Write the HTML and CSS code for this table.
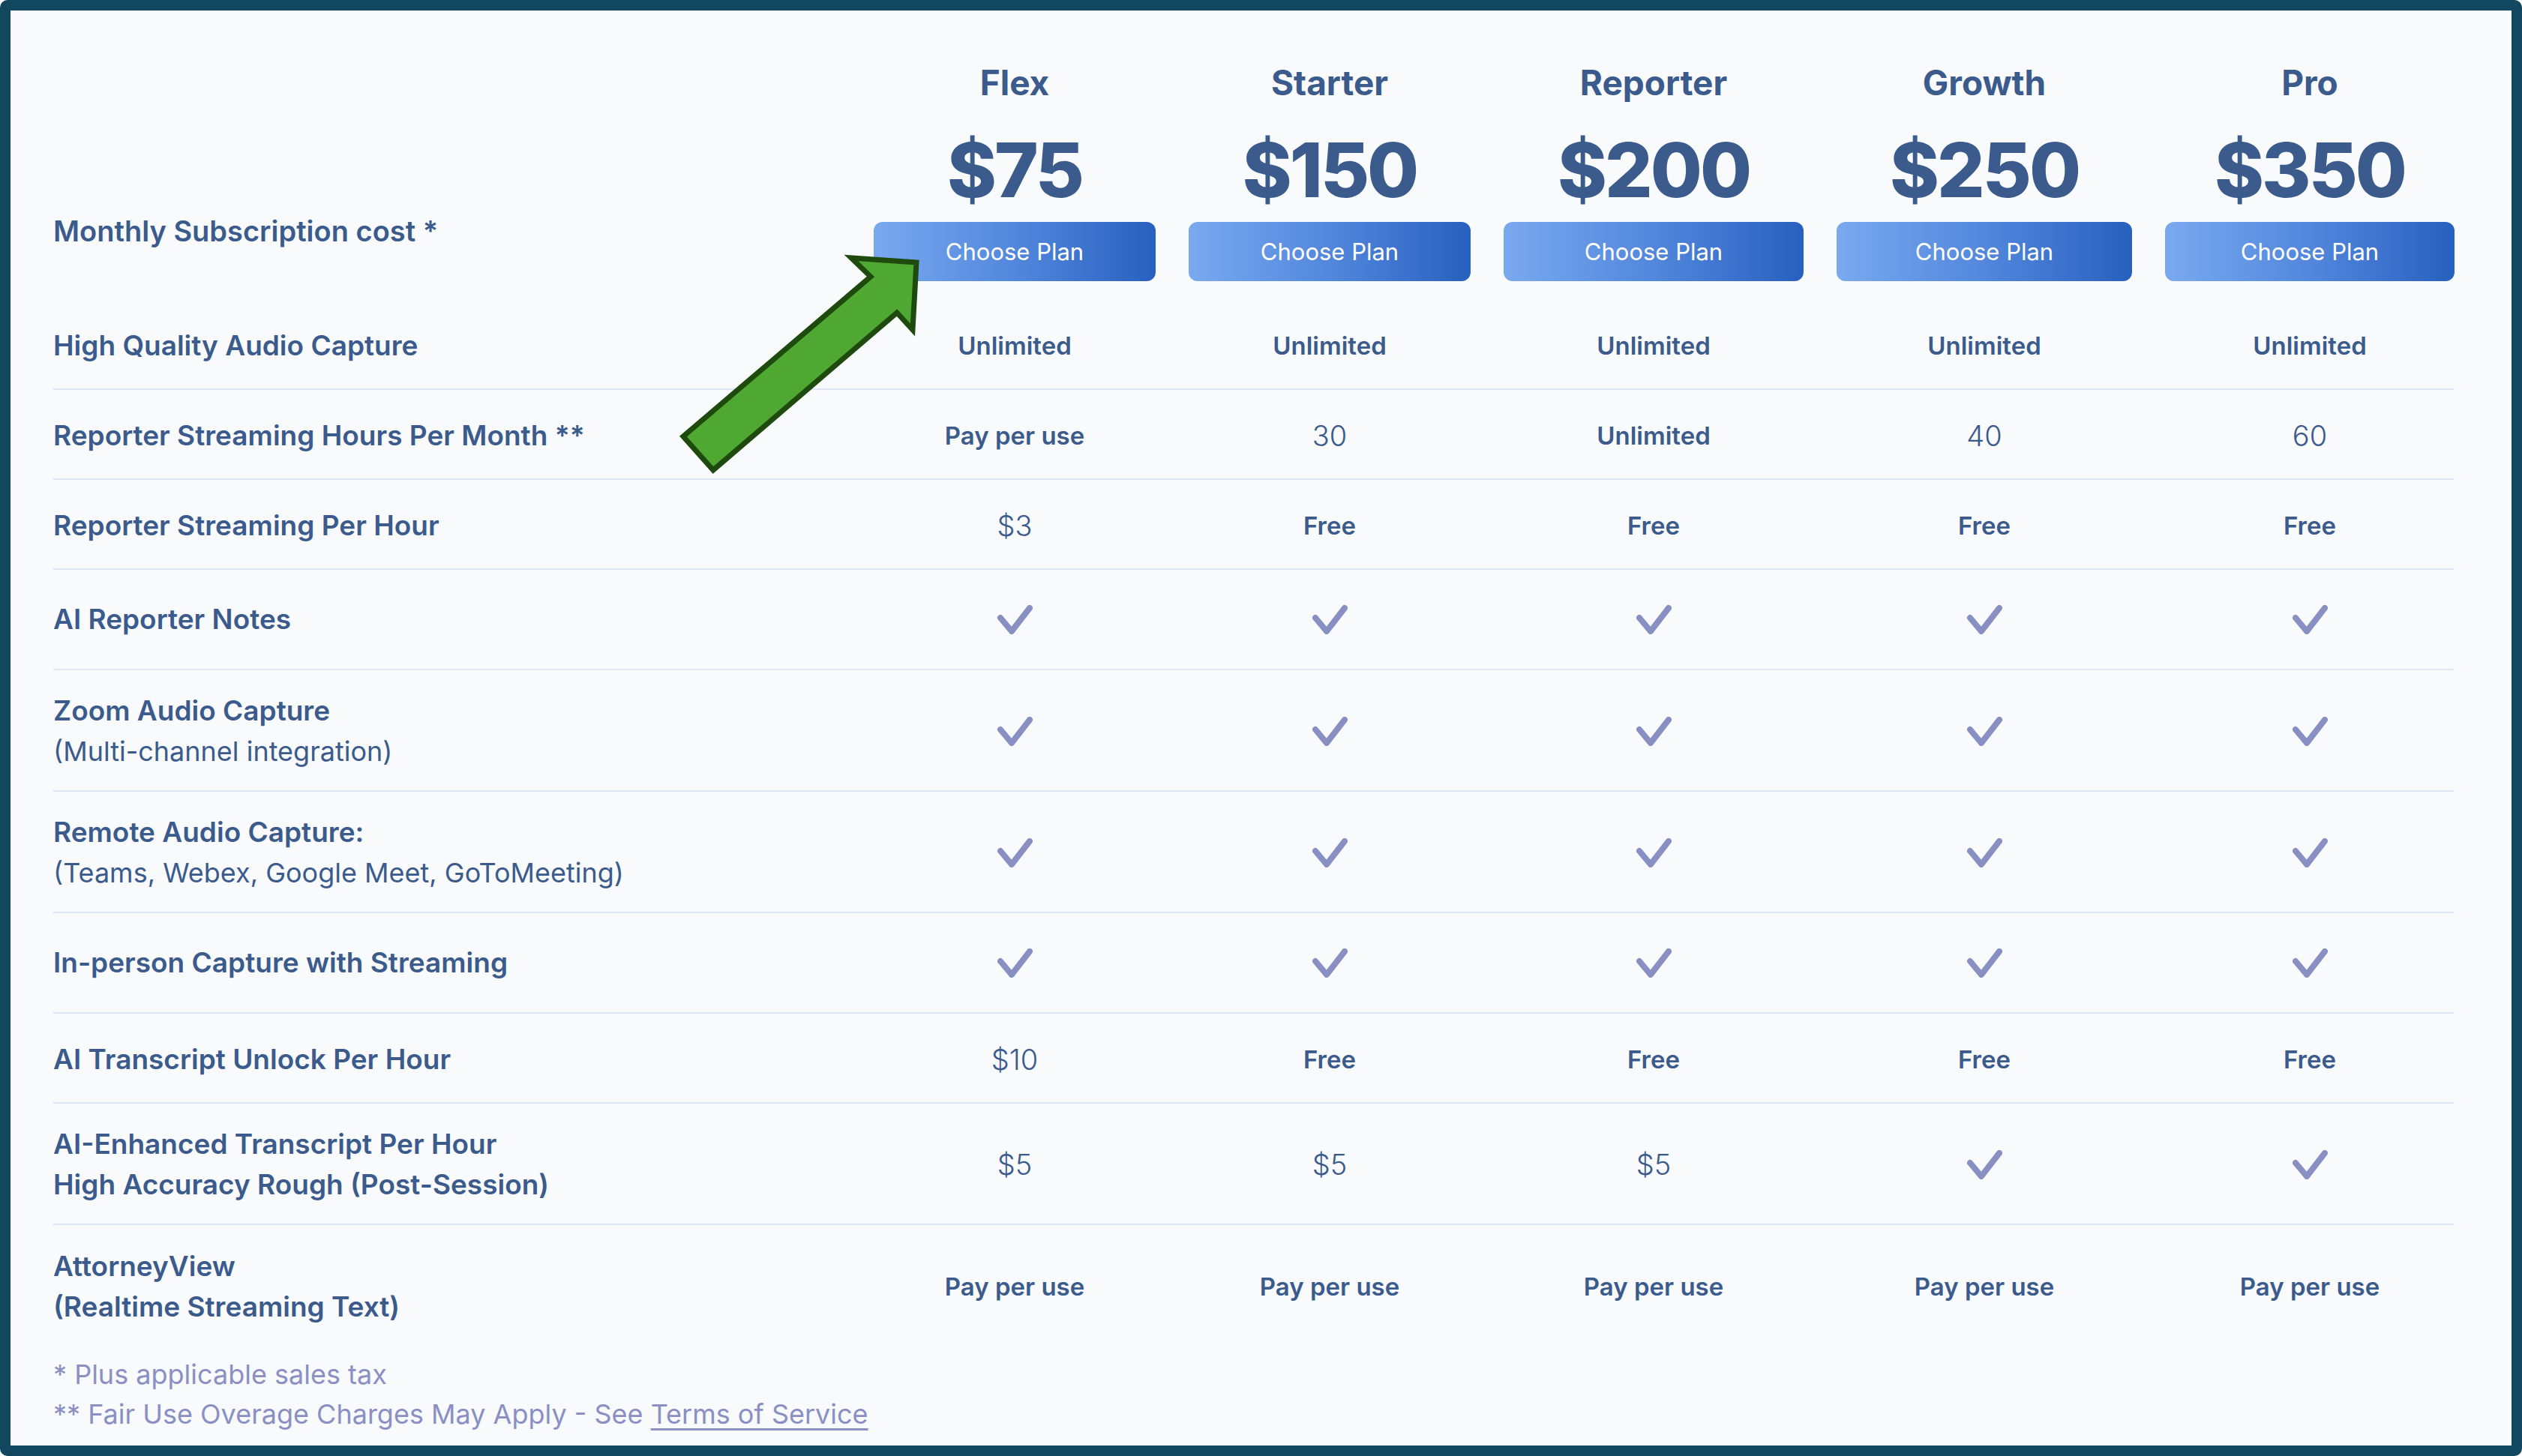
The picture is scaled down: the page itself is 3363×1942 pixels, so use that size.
FILE: index.html
```html
<!DOCTYPE html>
<html lang="en">
<head>
<meta charset="utf-8">
<title>Plans</title>
<link rel="stylesheet" href="styles.css">
</head>
<body>
<div class="frame">
  <div class="table">
    <div class="head">
      <div class="head-label">Monthly Subscription cost *</div>
      <div class="plan"><div class="plan-name">Flex</div><div class="price">$75</div><button class="choose">Choose Plan</button></div>
      <div class="plan"><div class="plan-name">Starter</div><div class="price">$150</div><button class="choose">Choose Plan</button></div>
      <div class="plan"><div class="plan-name">Reporter</div><div class="price">$200</div><button class="choose">Choose Plan</button></div>
      <div class="plan"><div class="plan-name">Growth</div><div class="price">$250</div><button class="choose">Choose Plan</button></div>
      <div class="plan"><div class="plan-name">Pro</div><div class="price">$350</div><button class="choose">Choose Plan</button></div>
    </div>

    <div class="row">
      <div class="label">High Quality Audio Capture</div>
      <div class="val b">Unlimited</div><div class="val b">Unlimited</div><div class="val b">Unlimited</div><div class="val b">Unlimited</div><div class="val b">Unlimited</div>
    </div>

    <div class="row">
      <div class="label">Reporter Streaming Hours Per Month **</div>
      <div class="val b">Pay per use</div><div class="val n">30</div><div class="val b">Unlimited</div><div class="val n">40</div><div class="val n">60</div>
    </div>

    <div class="row">
      <div class="label">Reporter Streaming Per Hour</div>
      <div class="val n">$3</div><div class="val b">Free</div><div class="val b">Free</div><div class="val b">Free</div><div class="val b">Free</div>
    </div>

    <div class="row check">
      <div class="label">AI Reporter Notes</div>
      <div class="val"><svg class="tick" viewBox="0 0 47 39"><path d="M4 17 L19 35 L43 4"/></svg></div>
      <div class="val"><svg class="tick" viewBox="0 0 47 39"><path d="M4 17 L19 35 L43 4"/></svg></div>
      <div class="val"><svg class="tick" viewBox="0 0 47 39"><path d="M4 17 L19 35 L43 4"/></svg></div>
      <div class="val"><svg class="tick" viewBox="0 0 47 39"><path d="M4 17 L19 35 L43 4"/></svg></div>
      <div class="val"><svg class="tick" viewBox="0 0 47 39"><path d="M4 17 L19 35 L43 4"/></svg></div>
    </div>

    <div class="row two">
      <div class="label">Zoom Audio Capture<span class="sub">(Multi-channel integration)</span></div>
      <div class="val"><svg class="tick" viewBox="0 0 47 39"><path d="M4 17 L19 35 L43 4"/></svg></div>
      <div class="val"><svg class="tick" viewBox="0 0 47 39"><path d="M4 17 L19 35 L43 4"/></svg></div>
      <div class="val"><svg class="tick" viewBox="0 0 47 39"><path d="M4 17 L19 35 L43 4"/></svg></div>
      <div class="val"><svg class="tick" viewBox="0 0 47 39"><path d="M4 17 L19 35 L43 4"/></svg></div>
      <div class="val"><svg class="tick" viewBox="0 0 47 39"><path d="M4 17 L19 35 L43 4"/></svg></div>
    </div>

    <div class="row two">
      <div class="label">Remote Audio Capture:<span class="sub">(Teams, Webex, Google Meet, GoToMeeting)</span></div>
      <div class="val"><svg class="tick" viewBox="0 0 47 39"><path d="M4 17 L19 35 L43 4"/></svg></div>
      <div class="val"><svg class="tick" viewBox="0 0 47 39"><path d="M4 17 L19 35 L43 4"/></svg></div>
      <div class="val"><svg class="tick" viewBox="0 0 47 39"><path d="M4 17 L19 35 L43 4"/></svg></div>
      <div class="val"><svg class="tick" viewBox="0 0 47 39"><path d="M4 17 L19 35 L43 4"/></svg></div>
      <div class="val"><svg class="tick" viewBox="0 0 47 39"><path d="M4 17 L19 35 L43 4"/></svg></div>
    </div>

    <div class="row check">
      <div class="label">In-person Capture with Streaming</div>
      <div class="val"><svg class="tick" viewBox="0 0 47 39"><path d="M4 17 L19 35 L43 4"/></svg></div>
      <div class="val"><svg class="tick" viewBox="0 0 47 39"><path d="M4 17 L19 35 L43 4"/></svg></div>
      <div class="val"><svg class="tick" viewBox="0 0 47 39"><path d="M4 17 L19 35 L43 4"/></svg></div>
      <div class="val"><svg class="tick" viewBox="0 0 47 39"><path d="M4 17 L19 35 L43 4"/></svg></div>
      <div class="val"><svg class="tick" viewBox="0 0 47 39"><path d="M4 17 L19 35 L43 4"/></svg></div>
    </div>

    <div class="row">
      <div class="label">AI Transcript Unlock Per Hour</div>
      <div class="val n">$10</div><div class="val b">Free</div><div class="val b">Free</div><div class="val b">Free</div><div class="val b">Free</div>
    </div>

    <div class="row two">
      <div class="label">AI-Enhanced Transcript Per Hour<span class="line2">High Accuracy Rough (Post-Session)</span></div>
      <div class="val n">$5</div><div class="val n">$5</div><div class="val n">$5</div>
      <div class="val"><svg class="tick" viewBox="0 0 47 39"><path d="M4 17 L19 35 L43 4"/></svg></div>
      <div class="val"><svg class="tick" viewBox="0 0 47 39"><path d="M4 17 L19 35 L43 4"/></svg></div>
    </div>

    <div class="row two last">
      <div class="label">AttorneyView<span class="line2">(Realtime Streaming Text)</span></div>
      <div class="val b">Pay per use</div><div class="val b">Pay per use</div><div class="val b">Pay per use</div><div class="val b">Pay per use</div><div class="val b">Pay per use</div>
    </div>
  </div>

  <div class="notes">
    <p>* Plus applicable sales tax</p>
    <p>** Fair Use Overage Charges May Apply - See <a href="#">Terms of Service</a></p>
  </div>

  <svg class="arrow" viewBox="890 320 360 330" width="360" height="330">
    <polygon points="1222,350 1135,344 1161,369 911,582 951,627 1196,417 1217,440" />
  </svg>
</div>
</body>
</html>
```

FILE: styles.css
```css
* { box-sizing: border-box; }

html, body {
  margin: 0;
  padding: 0;
  background: #ffffff;
}

body {
  font-family: "Inter", "Liberation Sans", sans-serif;
  color: #3b5b8c;
}

.frame {
  position: relative;
  width: 3363px;
  height: 1942px;
  background: #f8fafc;
  border: 14px solid #124760;
  border-radius: 10px;
  padding: 68px 77px 0 57px;
}

.head,
.row {
  display: grid;
  grid-template-columns: 1050px 376px 376px 400px 394px 386px;
  column-gap: 44px;
}

.head {
  padding-bottom: 25px;
}

.head-label {
  align-self: end;
  font-size: 38px;
  line-height: 46px;
  font-weight: 600;
  margin-bottom: 44px;
}

.plan {
  display: flex;
  flex-direction: column;
  align-items: center;
}

.plan-name {
  font-size: 46px;
  line-height: 56px;
  font-weight: 700;
}

.price {
  margin-top: 34px;
  font-size: 100px;
  line-height: 110px;
  font-weight: 800;
  letter-spacing: -3px;
}

.choose {
  margin-top: 14px;
  width: 100%;
  height: 79px;
  border: none;
  border-radius: 12px;
  background: linear-gradient(90deg, #7aa9ef 0%, #5287dc 50%, #2860bf 100%);
  color: #ffffff;
  font-family: "Inter", "Liberation Sans", sans-serif;
  font-size: 31px;
  font-weight: 400;
  padding: 0;
}

.row {
  min-height: 120px;
  padding-top: 4px;
  align-items: center;
  border-bottom: 2px solid #dde6f4;
}

.row.check { min-height: 134px; padding-top: 0; }
.row.two { min-height: 162px; padding-top: 2px; }
.row.last { border-bottom: none; }

.label {
  font-size: 37px;
  line-height: 46px;
  font-weight: 600;
}

.label .sub,
.label .line2 {
  display: block;
  margin-top: 8px;
}

.label .sub {
  font-weight: 400;
  font-size: 36px;
}

.val {
  text-align: center;
  display: flex;
  justify-content: center;
  align-items: center;
}

.val.b {
  font-size: 33px;
  font-weight: 600;
}

.val.n {
  font-size: 38px;
  font-weight: 300;
}

.tick {
  width: 47px;
  height: 39px;
  fill: none;
  stroke: #8890c3;
  stroke-width: 8;
  stroke-linecap: round;
  stroke-linejoin: round;
}

.notes {
  margin-top: 11px;
  color: #8a90c3;
  font-size: 36px;
  line-height: 53px;
}

.notes p { margin: 0; }

.notes a {
  color: #8a90c3;
  text-decoration: underline;
  text-decoration-thickness: 3px;
  text-underline-offset: 6px;
}

.arrow {
  position: absolute;
  left: 876px;
  top: 306px;
}

.arrow polygon {
  fill: #4fa832;
  stroke: #1e4a0d;
  stroke-width: 7;
  stroke-linejoin: miter;
}
```
